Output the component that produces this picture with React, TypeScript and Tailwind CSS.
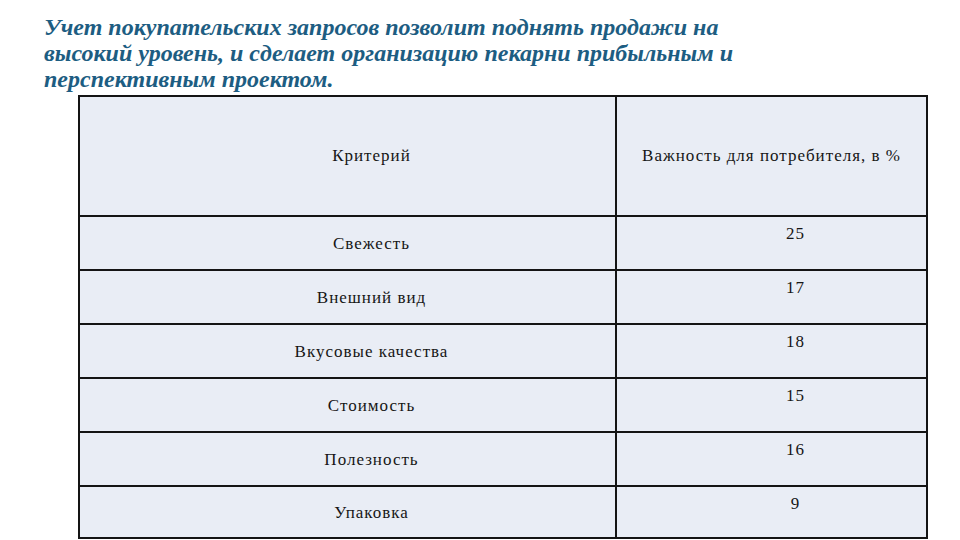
const rows: [string, string][] = [
  ["Свежесть", "25"],
  ["Внешний вид", "17"],
  ["Вкусовые качества", "18"],
  ["Стоимость", "15"],
  ["Полезность", "16"],
  ["Упаковка", "9"],
];

export default function App() {
  return (
    <div className="w-[960px] h-[540px] overflow-hidden bg-white font-[Liberation_Serif,serif]">
      {/* Заголовок */}
      <p className="pl-[44px] pt-[14px] text-[24px] leading-[26px] font-bold italic text-[#1d5d82] whitespace-nowrap">
        Учет покупательских запросов позволит поднять продажи на
        <br />
        высокий уровень, и сделает организацию пекарни прибыльным и
        <br />
        перспективным проектом.
      </p>

      {/* Таблица */}
      <table className="ml-[78px] mt-[3px] w-[850px] border-collapse bg-[#e9edf5] text-[17px] tracking-[1px] text-[#161616]">
        <tbody>
          <tr className="h-[120px]">
            <td className="w-[537px] border-2 border-[#141414] pl-[48px] text-center align-middle">
              Критерий
            </td>
            <td className="border-2 border-[#141414] text-center align-middle">
              Важность для потребителя, в %
            </td>
          </tr>
          {rows.map(([name, value], i) => (
            <tr key={name} className={i === rows.length - 1 ? "h-[52px]" : "h-[54px]"}>
              <td className="border-2 border-[#141414] pl-[48px] pt-[2px] text-center align-middle">
                {name}
              </td>
              <td className="border-2 border-[#141414] pl-[48px] pt-[4px] text-center align-top">
                {value}
              </td>
            </tr>
          ))}
        </tbody>
      </table>
    </div>
  );
}
